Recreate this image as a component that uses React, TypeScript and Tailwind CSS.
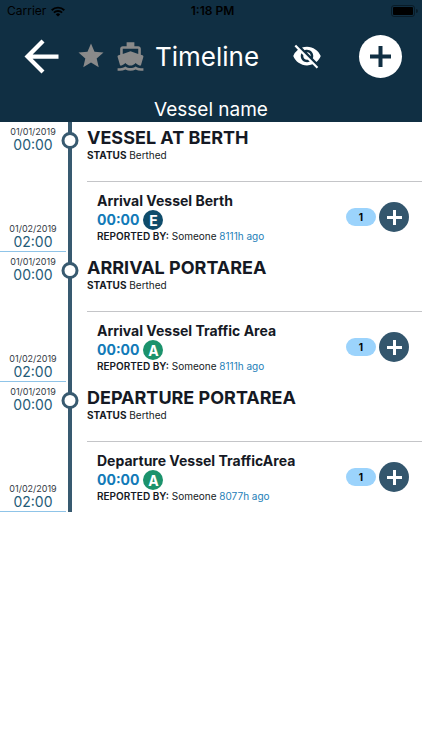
import { MdArrowBack, MdDirectionsBoat, MdStar, MdVisibilityOff } from 'react-icons/md'

interface TimelineEvent {
  title: string
  status: string
  startDate: string
  startTime: string
  endDate: string
  endTime: string
  statement: string
  kind: 'E' | 'A'
  reporter: string
  reported: string
  count: number
}

const events: TimelineEvent[] = [
  {
    title: 'VESSEL AT BERTH', status: 'Berthed',
    startDate: '01/01/2019', startTime: '00:00', endDate: '01/02/2019', endTime: '02:00',
    statement: 'Arrival Vessel Berth', kind: 'E', reporter: 'Someone', reported: '8111h ago', count: 1,
  },
  {
    title: 'ARRIVAL PORTAREA', status: 'Berthed',
    startDate: '01/01/2019', startTime: '00:00', endDate: '01/02/2019', endTime: '02:00',
    statement: 'Arrival Vessel Traffic Area', kind: 'A', reporter: 'Someone', reported: '8111h ago', count: 1,
  },
  {
    title: 'DEPARTURE PORTAREA', status: 'Berthed',
    startDate: '01/01/2019', startTime: '00:00', endDate: '01/02/2019', endTime: '02:00',
    statement: 'Departure Vessel TrafficArea', kind: 'A', reporter: 'Someone', reported: '8077h ago', count: 1,
  },
]

const kindColors = {
  E: 'bg-[#0f4c6b]',
  A: 'bg-[#1b926c]',
}

function WifiIcon() {
  return (
    <svg width="14" height="11" viewBox="0 0 14 11" fill="none" stroke="currentColor" strokeWidth="1.9">
      <path d="M0.7 4.2a9 9 0 0 1 12.6 0" />
      <path d="M2.9 6.6a5.9 5.9 0 0 1 8.2 0" />
      <path d="M7 10.6 4.8 8.4a3.2 3.2 0 0 1 4.4 0z" fill="currentColor" stroke="none" />
    </svg>
  )
}

function BatteryIcon() {
  return (
    <svg width="27" height="12" viewBox="0 0 27 12">
      <rect x="0.5" y="0.5" width="23" height="11" rx="2.5" fill="none" stroke="#000" strokeOpacity="0.4" />
      <rect x="2" y="2" width="20" height="8" rx="1" fill="#000" />
      <path d="M25 4v4a2 2 0 0 0 0-4z" fill="#000" fillOpacity="0.4" />
    </svg>
  )
}

function StatusBar() {
  return (
    <div className="grid h-[22px] grid-cols-3 items-center pl-[7px] pr-1 text-[12px] text-black">
      <div className="flex items-center gap-[5px]">
        Carrier
        <WifiIcon />
      </div>
      <span className="text-center font-semibold">1:18 PM</span>
      <div className="flex justify-end">
        <BatteryIcon />
      </div>
    </div>
  )
}

function Header() {
  return (
    <header className="h-[122px] bg-[#102f43] text-white">
      <StatusBar />
      <div className="flex h-[68px] items-center pl-4 pr-5">
        <button type="button" aria-label="Back">
          <MdArrowBack size={51} />
        </button>
        <MdStar size={30} className="ml-[9px] text-[#8a8a8a]" />
        <MdDirectionsBoat size={31} className="ml-[9px] text-[#8a8a8a]" />
        <h1 className="ml-[9px] text-[26px]">Timeline</h1>
        <div className="flex flex-1 justify-center pr-1">
          <button type="button" aria-label="Hide expired events">
            <MdVisibilityOff size={30} />
          </button>
        </div>
        <button type="button" aria-label="Add event" className="flex size-[43px] items-center justify-center rounded-full bg-white text-[#102f43]">
          <svg width="21" height="21" viewBox="0 0 21 21" stroke="currentColor" strokeWidth="4">
            <path d="M10.5 0v21M0 10.5h21" />
          </svg>
        </button>
      </div>
      <p className="text-center text-[19px] leading-10">Vessel name</p>
    </header>
  )
}

function TimeStamp({ date, time }: { date: string; time: string }) {
  return (
    <div className="text-center">
      <p className="text-[9px] leading-3 text-[#333a45]">{date}</p>
      <p className="text-[14px] leading-[14px] text-[#1f5c78]">{time}</p>
    </div>
  )
}

function EventRow({ event }: { event: TimelineEvent }) {
  return (
    <li className="flex h-[130px]">
      <div className="flex w-[66px] shrink-0 flex-col justify-between border-b border-[#8fc4e8] pt-1 pb-[2px]">
        <TimeStamp date={event.startDate} time={event.startTime} />
        <TimeStamp date={event.endDate} time={event.endTime} />
      </div>

      {/* Vertical line with the event marker on it */}
      <div className="relative ml-[2px] w-1 shrink-0 bg-[#385a70]">
        <span className="absolute left-1/2 top-[10px] size-[17px] -translate-x-1/2 rounded-full border-3 border-[#385a70] bg-white" />
      </div>

      <div className="ml-[15px] min-w-0 flex-1">
        <div className="h-[60px] border-b border-[#c4c5c8] pt-[5px]">
          <h2 className="text-[18px] font-bold leading-[22px]">{event.title}</h2>
          <p className="text-[10px] leading-3">
            <span className="font-bold">STATUS</span> {event.status}
          </p>
        </div>
        <div className="flex items-center justify-between pl-[10px] pr-[13px] pt-[10px]">
          <div>
            <h3 className="text-[14px] font-bold leading-[18px]">{event.statement}</h3>
            <div className="flex items-center gap-1">
              <span className="text-[14px] font-bold leading-4 text-[#127ab8]">{event.startTime}</span>
              <span className={`flex size-5 items-center justify-center rounded-full text-[14px] font-bold text-white ${kindColors[event.kind]}`}>
                {event.kind}
              </span>
            </div>
            <p className="text-[10px] leading-3">
              <span className="font-semibold">REPORTED BY:</span> {event.reporter}{' '}
              <span className="text-[#2480b8]">{event.reported}</span>
            </p>
          </div>
          <div className="flex items-center gap-[3px]">
            <span className="h-[18px] w-[30px] rounded-full bg-[#9bd3fc] text-center text-[10px] font-bold leading-[18px] text-black">
              {event.count}
            </span>
            <button type="button" aria-label="Add statement" className="flex size-[30px] items-center justify-center rounded-full bg-[#33566d] text-white">
              <svg width="15" height="15" viewBox="0 0 15 15" stroke="currentColor" strokeWidth="3">
                <path d="M7.5 0v15M0 7.5h15" />
              </svg>
            </button>
          </div>
        </div>
      </div>
    </li>
  )
}

export default function App() {
  return (
    <div className="min-h-screen bg-white font-['Inter',sans-serif] text-[#151924]">
      <Header />
      <main>
        <ul>
          {events.map(event => (
            <EventRow key={event.title} event={event} />
          ))}
        </ul>
      </main>
    </div>
  )
}
